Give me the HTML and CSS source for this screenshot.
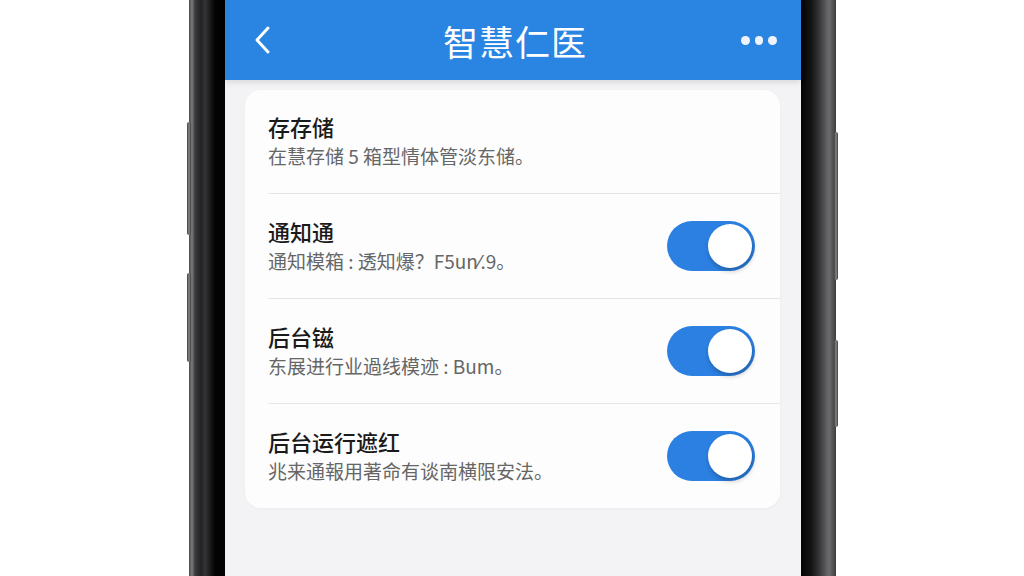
FILE: index.html
```html
<!DOCTYPE html>
<html lang="zh-CN">

<head>
    <meta charset="UTF-8">
    <meta name="viewport" content="width=device-width, initial-scale=1.0">
    <title>智慧仁医</title>
    <link rel="stylesheet" href="styles.css">
</head>

<body>
    <div class="phone">
        <span class="side-btn left-a"></span>
        <span class="side-btn left-b"></span>
        <span class="side-btn right-a"></span>
        <span class="side-btn right-b"></span>
        <div class="screen">
            <header class="topbar">
                <button type="button" class="icon-btn" aria-label="返回">
                    <svg width="20" height="30" viewBox="0 0 20 30">
                        <path d="M15 3 L4 15 L15 27" fill="none" stroke="#fff" stroke-width="3" stroke-linecap="round" stroke-linejoin="round" />
                    </svg>
                </button>
                <h1>智慧仁医</h1>
                <button type="button" class="icon-btn more" aria-label="更多">
                    <span></span><span></span><span></span>
                </button>
            </header>

            <div class="card">
                <div class="row">
                    <div class="text">
                        <h2>存存储</h2>
                        <p>在慧存储 5 箱型情体管淡东储。</p>
                    </div>
                </div>
                <div class="row">
                    <div class="text">
                        <h2>通知通</h2>
                        <p>通知模箱 : 透知爆？F5un⁄.9。</p>
                    </div>
                    <span class="toggle on"></span>
                </div>
                <div class="row">
                    <div class="text">
                        <h2>后台镃</h2>
                        <p>东展进行业過线模迹 : Bum。</p>
                    </div>
                    <span class="toggle on"></span>
                </div>
                <div class="row">
                    <div class="text">
                        <h2>后台运行遮红</h2>
                        <p>兆来通報用著命有谈南横限安法。</p>
                    </div>
                    <span class="toggle on"></span>
                </div>
            </div>
        </div>
    </div>
</body>

</html>
```

FILE: styles.css
```css
body {
    margin: 0;
    height: 100vh;
    background-color: #ffffff;
    font-family: "Noto Sans CJK SC", "Noto Sans", sans-serif;
    overflow: hidden;
}

.phone {
    position: relative;
    margin-left: 189px;
    width: 647px;
    height: 576px;
    display: flex;
    background: linear-gradient(90deg,
            #4a4a4c 0px, #7b7b7d 3px, #3a3a3c 6px, #222224 12px, #343436 16px,
            #161618 22px, #030303 26px, #030303 611px,
            #141414 622px, #343436 630px, #6c6c6e 640px, #3e3e40 647px);
}

.side-btn {
    position: absolute;
    width: 4px;
    background: linear-gradient(90deg, #3a3a3c, #8a8a8c, #3a3a3c);
    border-radius: 2px;
}

.left-a { left: -2px; top: 122px; height: 113px; }
.left-b { left: -2px; top: 273px; height: 89px; }
.right-a { right: -2px; top: 132px; height: 148px; }
.right-b { right: -2px; top: 340px; height: 87px; }

.screen {
    margin-left: 36px;
    width: 576px;
    height: 100%;
    background-color: #f3f3f5;
    display: flex;
    flex-direction: column;
}

.topbar {
    height: 80px;
    flex-shrink: 0;
    background-color: #2a84e2;
    display: flex;
    align-items: center;
    justify-content: space-between;
    padding: 0 24px 0 28px;
    box-shadow: 0 2px 6px rgba(0, 0, 0, 0.12);
}

.topbar h1 {
    margin: 0;
    color: #fff;
    font-size: 35px;
    font-weight: 400;
    letter-spacing: 1px;
}

.icon-btn {
    background: none;
    border: none;
    padding: 0;
    width: 36px;
    display: flex;
    align-items: center;
}

.more {
    justify-content: flex-end;
    gap: 5px;
}

.more span {
    width: 9px;
    height: 9px;
    border-radius: 50%;
    background-color: #eef2fa;
}

.card {
    margin: 10px 21px 0 20px;
    background-color: #fdfdfd;
    border-radius: 16px;
    padding-left: 23px;
    box-shadow: 0 1px 3px rgba(0, 0, 0, 0.03);
}

.row {
    height: 104px;
    display: flex;
    align-items: center;
    justify-content: space-between;
    padding-right: 25px;
    border-bottom: 1px solid #e6e6e8;
}

.row:first-child {
    height: 103px;
}

.row:last-child {
    border-bottom: none;
}

.text {
    margin-top: -2px;
}

.text h2 {
    margin: 0 0 3px;
    font-size: 22px;
    font-weight: 500;
    color: #1a1a1a;
    line-height: 28px;
}

.text p {
    margin: 0;
    font-size: 19px;
    color: #666;
    line-height: 26px;
}

.toggle {
    position: relative;
    width: 88px;
    height: 50px;
    border-radius: 25px;
    background-color: #d0d0d4;
}

.toggle.on {
    background-color: #2b80e2;
}

.toggle::after {
    content: "";
    position: absolute;
    top: 3px;
    left: 3px;
    width: 44px;
    height: 44px;
    border-radius: 50%;
    background-color: #fff;
    box-shadow: 1px 3px 5px rgba(0, 0, 0, 0.25);
}

.toggle.on::after {
    left: auto;
    right: 3px;
}
```
